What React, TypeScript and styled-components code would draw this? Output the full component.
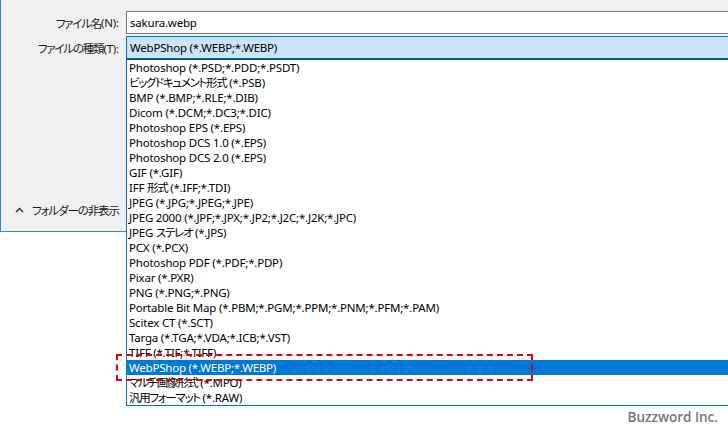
import React from "react";
import styled, { createGlobalStyle } from "styled-components";

const GlobalStyle = createGlobalStyle`
  html, body {
    margin: 0;
    padding: 0;
    background: #ffffff;
  }
  body {
    font-family: "Noto Sans", "Noto Sans CJK JP", sans-serif;
    font-size: 11.5px;
    letter-spacing: -0.2px;
    font-feature-settings: "palt";
    color: #000;
  }
`;

const fileTypes = [
  "Photoshop (*.PSD;*.PDD;*.PSDT)",
  "ビッグドキュメント形式 (*.PSB)",
  "BMP (*.BMP;*.RLE;*.DIB)",
  "Dicom (*.DCM;*.DC3;*.DIC)",
  "Photoshop EPS (*.EPS)",
  "Photoshop DCS 1.0 (*.EPS)",
  "Photoshop DCS 2.0 (*.EPS)",
  "GIF (*.GIF)",
  "IFF 形式 (*.IFF;*.TDI)",
  "JPEG (*.JPG;*.JPEG;*.JPE)",
  "JPEG 2000 (*.JPF;*.JPX;*.JP2;*.J2C;*.J2K;*.JPC)",
  "JPEG ステレオ (*.JPS)",
  "PCX (*.PCX)",
  "Photoshop PDF (*.PDF;*.PDP)",
  "Pixar (*.PXR)",
  "PNG (*.PNG;*.PNG)",
  "Portable Bit Map (*.PBM;*.PGM;*.PPM;*.PNM;*.PFM;*.PAM)",
  "Scitex CT (*.SCT)",
  "Targa (*.TGA;*.VDA;*.ICB;*.VST)",
  "TIFF (*.TIF;*.TIFF)",
  "WebPShop (*.WEBP;*.WEBP)",
  "マルチ画像形式 (*.MPO)",
  "汎用フォーマット (*.RAW)",
];

const selected = "WebPShop (*.WEBP;*.WEBP)";

const Screen = styled.div`
  position: relative;
  width: 728px;
  height: 430px;
  overflow: hidden;
  background: #fff;
`;

const Dialog = styled.div`
  height: 231px;
  background: #f0f0f0;
  border-left: 1px solid #2b88d8;
  border-bottom: 1px solid #2b88d8;
  display: flex;
  flex-direction: column;
  justify-content: space-between;
`;

const Form = styled.div`
  display: grid;
  grid-template-columns: 125px 620px;
  row-gap: 2px;
  padding-top: 11px;
`;

const Label = styled.div`
  padding-right: 7px;
  display: flex;
  align-items: center;
  justify-content: flex-end;
  color: #1a1a1a;
  white-space: nowrap;
`;

const TextBox = styled.div`
  height: 21px;
  border: 1px solid #7a7a7a;
  border-right: none;
  background: #fff;
  display: flex;
  align-items: center;
  padding-left: 3px;
`;

const Combo = styled.div`
  height: 21px;
  border-top: 1px solid #0078d7;
  border-left: 1px solid #0078d7;
  border-bottom: 2px solid #005a9e;
  background: #cce4f7;
  display: flex;
  align-items: center;
  padding-left: 3px;
`;

const Footer = styled.div`
  display: flex;
  align-items: center;
  gap: 8px;
  padding: 0 0 13px 14px;
  color: #1a1a1a;
`;

const List = styled.ul`
  position: absolute;
  top: 60px;
  left: 126px;
  width: 620px;
  margin: 0;
  padding: 0;
  list-style: none;
  background: #fff;
  border-left: 1px solid #0078d7;
  border-bottom: 1px solid #0078d7;
`;

const Item = styled.li<{ $active?: boolean }>`
  height: 15px;
  line-height: 15px;
  padding-left: 2px;
  white-space: pre;
  background: ${(p) => (p.$active ? "#0078d7" : "transparent")};
  color: ${(p) => (p.$active ? "#fff" : "#000")};
`;

// Japanese runs are tighter in the original UI font
const Cjk = styled.span<{ $tight?: number }>`
  font-family: "Noto Sans CJK JP", sans-serif;
  letter-spacing: ${(p) => p.$tight ?? -1.3}px;
`;

const Marker = styled.div`
  position: absolute;
  left: 116px;
  top: 354px;
  width: 413px;
  height: 23px;
  border: 2px dashed #e60012;
`;

const Credit = styled.div`
  position: absolute;
  right: 10px;
  bottom: 4px;
  font-family: "Open Sans", sans-serif;
  font-weight: 600;
  font-size: 13.5px;
  letter-spacing: 0;
  color: #767676;
`;

const Chevron = () => (
  <svg width="9" height="6" viewBox="0 0 9 6">
    <polyline points="1,5 4.5,1.5 8,5" fill="none" stroke="#333" strokeWidth="1.5" />
  </svg>
);

const cjkRe = /([\u3000-\u30ff\u4e00-\u9fff\uff00-\uffef]+)/;

function Txt({ text, tight }: { text: string; tight?: number }) {
  return (
    <>
      {text.split(cjkRe).map((part, i) =>
        i % 2 === 1 ? (
          <Cjk key={i} $tight={tight}>
            {part}
          </Cjk>
        ) : (
          part
        )
      )}
    </>
  );
}

export default function App() {
  return (
    <>
      <GlobalStyle />
      <Screen>
        <Dialog>
          <Form>
            <Label>
              <Txt text="ファイル名" tight={-1.2} />
              (N):
            </Label>
            <TextBox>sakura.webp</TextBox>
            <Label>
              <Txt text="ファイルの種類" tight={-1.2} />
              (T):
            </Label>
            <Combo>{selected}</Combo>
          </Form>
          <Footer>
            <Chevron />
            <Txt text="フォルダーの非表示" tight={-1.1} />
          </Footer>
        </Dialog>
        <List>
          {fileTypes.map((t) => (
            <Item key={t} $active={t === selected}>
              <Txt text={t} />
            </Item>
          ))}
        </List>
        <Marker />
        <Credit>Buzzword Inc.</Credit>
      </Screen>
    </>
  );
}
